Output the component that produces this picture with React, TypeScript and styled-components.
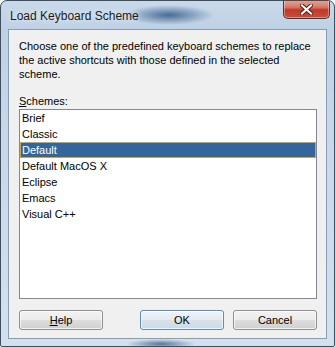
import React from "react";
import styled, { createGlobalStyle } from "styled-components";

const GlobalStyle = createGlobalStyle`
  html, body {
    margin: 0;
    padding: 0;
    background: #ffffff;
  }
  body {
    font-family: "Liberation Sans", Arial, sans-serif;
  }
`;

const Window = styled.div`
  box-sizing: border-box;
  width: 335px;
  height: 347px;
  display: flex;
  flex-direction: column;
  border: 1px solid #3f4d5c;
  border-radius: 7px 7px 2px 2px;
  background:
    radial-gradient(ellipse 45px 10px at 168px 14px, rgba(40, 80, 130, 0.8), rgba(40, 80, 130, 0) 100%),
    radial-gradient(ellipse 35px 5px at 160px 343px, rgba(40, 70, 110, 0.7), rgba(40, 70, 110, 0) 100%),
    linear-gradient(180deg, #c9d9ea 0px, #bfd1e5 28px, #c6d7ea 120px, #d3e1ef 100%);
  overflow: hidden;
`;

const TitleBar = styled.div`
  height: 28px;
  display: flex;
  justify-content: space-between;
  align-items: flex-start;
  padding-left: 9px;
  padding-right: 4px;
  flex-shrink: 0;
`;

const Title = styled.span`
  margin-top: 8px;
  font-size: 12px;
  color: #1b1b1b;
  text-shadow: 0 0 6px rgba(255, 255, 255, 0.9);
`;

const CloseButton = styled.div`
  width: 47px;
  height: 19px;
  margin-top: -1px;
  display: flex;
  align-items: center;
  justify-content: center;
  box-sizing: border-box;
  border: 1px solid #6a2b25;
  border-top: none;
  border-radius: 0 0 5px 5px;
  background: linear-gradient(180deg, #e4a797 0%, #d47a68 40%, #c0392a 55%, #c9503c 100%);
  box-shadow: inset 0 0 0 1px rgba(255, 255, 255, 0.35);
`;

const Client = styled.div`
  flex: 1;
  display: flex;
  flex-direction: column;
  margin: 0 7px 7px 7px;
  border: 1px solid #8a9cb0;
  background: #f0f0f0;
  padding: 9px 9px 8px 10px;
  font-size: 11px;
  color: #000000;
`;

const Description = styled.p`
  margin: 0;
  line-height: 14px;
`;

const Label = styled.div`
  margin-top: 13px;
  line-height: 14px;
`;

const Key = styled.span`
  text-decoration: underline;
  text-underline-offset: 1px;
`;

const ListBox = styled.div`
  margin-top: 1px;
  height: 190px;
  box-sizing: border-box;
  border: 1px solid #828790;
  background: #ffffff;
  display: flex;
  flex-direction: column;
`;

const Row = styled.div<{ $selected?: boolean }>`
  height: 16px;
  box-sizing: border-box;
  line-height: 14px;
  padding-left: 1px;
  border: 1px solid ${({ $selected }) => ($selected ? "#c9a552" : "transparent")};
  background: ${({ $selected }) => ($selected ? "#33669a" : "transparent")};
  color: ${({ $selected }) => ($selected ? "#ffffff" : "#000000")};
  white-space: nowrap;
`;

const ButtonRow = styled.div`
  margin-top: 11px;
  display: flex;
  align-items: center;
`;

const Spacer = styled.div`
  flex: 1;
`;

const Button = styled.div<{ $default?: boolean }>`
  width: 84px;
  height: 20px;
  box-sizing: border-box;
  display: flex;
  align-items: center;
  justify-content: center;
  border: 1px solid ${({ $default }) => ($default ? "#5d8bb8" : "#8e8f8f")};
  border-radius: 3px;
  background: ${({ $default }) =>
    $default
      ? "linear-gradient(180deg, #eef4f8 0%, #e3ebf1 48%, #d6e1e9 52%, #cfdbe4 100%)"
      : "linear-gradient(180deg, #f2f2f2 0%, #ebebeb 48%, #dddddd 52%, #cfcfcf 100%)"};
  box-shadow: inset 0 0 0 1px rgba(255, 255, 255, 0.7);
  color: #000000;
  & + & {
    margin-left: 9px;
  }
`;

const schemes = ["Brief", "Classic", "Default", "Default MacOS X", "Eclipse", "Emacs", "Visual C++"];

export default function App() {
  const selected = "Default";
  return (
    <>
      <GlobalStyle />
      <Window>
        <TitleBar>
          <Title>Load Keyboard Scheme</Title>
          <CloseButton>
            <svg width="13" height="11" viewBox="0 0 13 11">
              <path d="M2 1.5 L11 9.5 M11 1.5 L2 9.5" stroke="#4a1a14" strokeWidth="4" strokeLinecap="square" />
              <path d="M2 1.5 L11 9.5 M11 1.5 L2 9.5" stroke="#ffffff" strokeWidth="2.2" strokeLinecap="square" />
            </svg>
          </CloseButton>
        </TitleBar>
        <Client>
          <Description>
            Choose one of the predefined keyboard schemes to replace the active shortcuts with those defined in the
            selected scheme.
          </Description>
          <Label>
            <Key>S</Key>chemes:
          </Label>
          <ListBox>
            {schemes.map((s) => (
              <Row key={s} $selected={s === selected}>
                {s}
              </Row>
            ))}
          </ListBox>
          <ButtonRow>
            <Button>
              <span>
                <Key>H</Key>elp
              </span>
            </Button>
            <Spacer />
            <Button $default>OK</Button>
            <Button>Cancel</Button>
          </ButtonRow>
        </Client>
      </Window>
    </>
  );
}
